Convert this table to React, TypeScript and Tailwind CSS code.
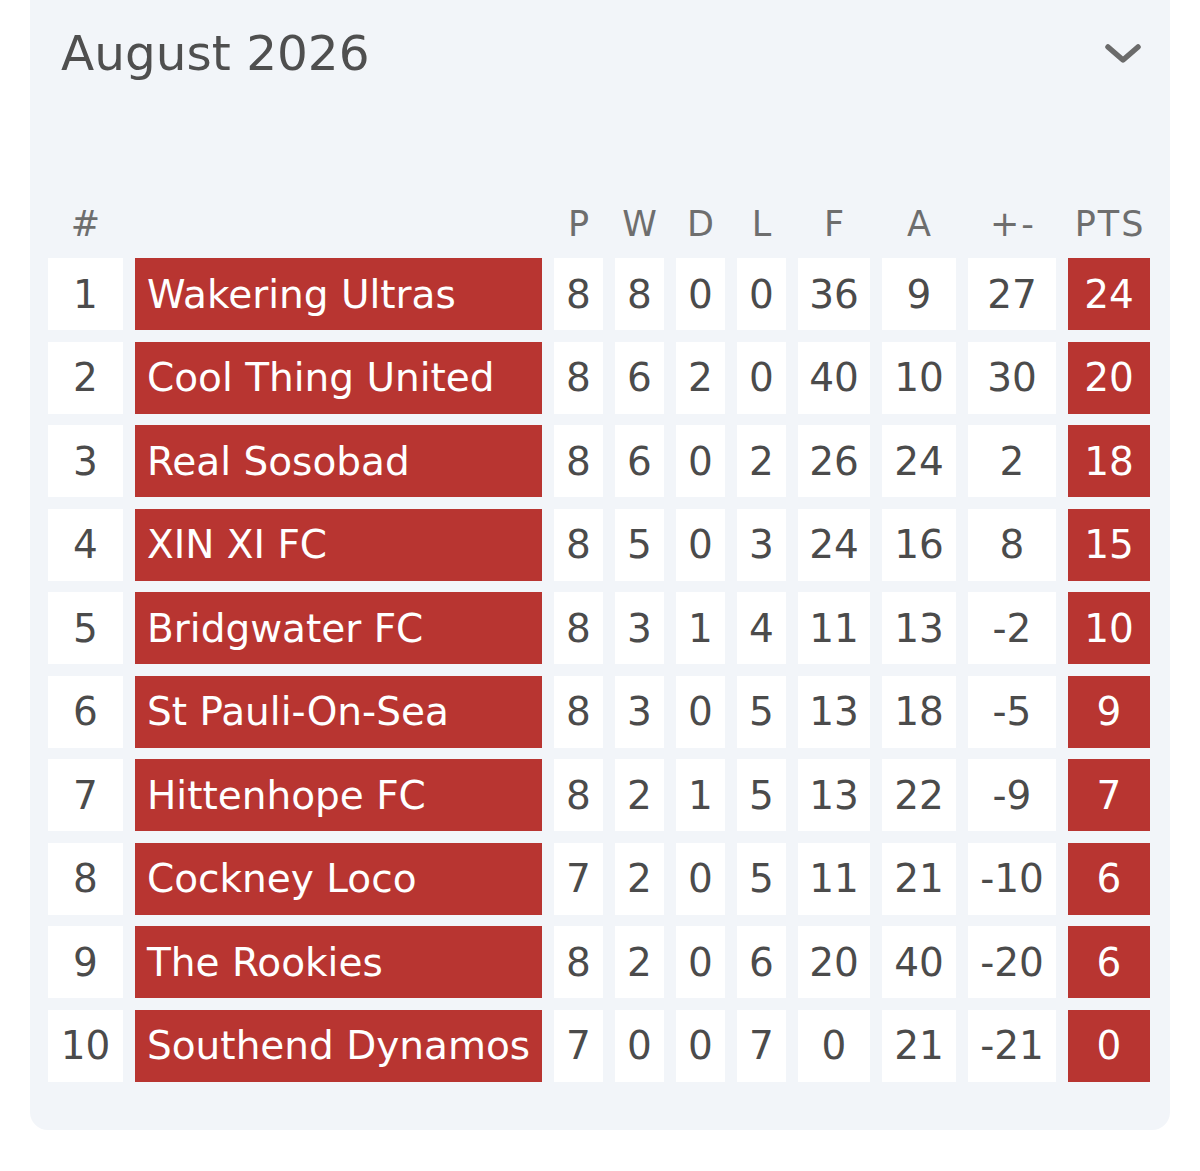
import { useState } from 'react';

interface Team {
  pos: number;
  name: string;
  p: number;
  w: number;
  d: number;
  l: number;
  f: number;
  a: number;
  gd: number;
  pts: number;
}

const teams: Team[] = [
  { pos: 1, name: 'Wakering Ultras', p: 8, w: 8, d: 0, l: 0, f: 36, a: 9, gd: 27, pts: 24 },
  { pos: 2, name: 'Cool Thing United', p: 8, w: 6, d: 2, l: 0, f: 40, a: 10, gd: 30, pts: 20 },
  { pos: 3, name: 'Real Sosobad', p: 8, w: 6, d: 0, l: 2, f: 26, a: 24, gd: 2, pts: 18 },
  { pos: 4, name: 'XIN XI FC', p: 8, w: 5, d: 0, l: 3, f: 24, a: 16, gd: 8, pts: 15 },
  { pos: 5, name: 'Bridgwater FC', p: 8, w: 3, d: 1, l: 4, f: 11, a: 13, gd: -2, pts: 10 },
  { pos: 6, name: 'St Pauli-On-Sea', p: 8, w: 3, d: 0, l: 5, f: 13, a: 18, gd: -5, pts: 9 },
  { pos: 7, name: 'Hittenhope FC', p: 8, w: 2, d: 1, l: 5, f: 13, a: 22, gd: -9, pts: 7 },
  { pos: 8, name: 'Cockney Loco', p: 7, w: 2, d: 0, l: 5, f: 11, a: 21, gd: -10, pts: 6 },
  { pos: 9, name: 'The Rookies', p: 8, w: 2, d: 0, l: 6, f: 20, a: 40, gd: -20, pts: 6 },
  { pos: 10, name: 'Southend Dynamos', p: 7, w: 0, d: 0, l: 7, f: 0, a: 21, gd: -21, pts: 0 },
];

const cols = 'grid grid-cols-[75px_407px_49px_49px_49px_49px_72px_74px_88px_82px] gap-x-[12px]';
const headers = ['#', '', 'P', 'W', 'D', 'L', 'F', 'A', '+-', 'PTS'];

function NumCell({ value }: { value: number }) {
  return (
    <div className="h-[72px] bg-white flex items-center justify-center text-[#4b4b4b]">
      {value}
    </div>
  );
}

export default function App() {
  const [open, setOpen] = useState(true);

  return (
    <div
      className="min-h-screen bg-white px-[30px]"
      style={{ fontFamily: '"DejaVu Sans", "Noto Sans", sans-serif' }}
    >
      <div className="bg-[#f2f5f9] rounded-b-[18px] pl-[18px] pr-[18px] pb-[48px]">
        {/* Header */}
        <div className="flex items-center justify-between pl-[13px] pr-[11px] h-[110px] pb-[2px]">
          <h2 className="text-[48.5px] text-[#4f4f4f] leading-none -mt-[2px]">August 2026</h2>
          <button onClick={() => setOpen(!open)} className="text-[#6b6b6b]">
            <svg width="36" height="20" viewBox="0 0 36 20" fill="none">
              <path d="M3 3 L18 16 L33 3" stroke="currentColor" strokeWidth="5.5" strokeLinecap="round" strokeLinejoin="round" />
            </svg>
          </button>
        </div>

        {open && (
          <div className="text-[39px] leading-none">
            {/* Column headings */}
            <div className={`${cols} h-[148px] items-end pb-[16px] text-[#6e6e6e] text-[35px]`}>
              {headers.map((h, i) => (
                <div key={i} className="text-center tracking-[2px] pl-[2px]">{h}</div>
              ))}
            </div>

            {/* Rows */}
            <div className="flex flex-col gap-y-[11.5px]">
              {teams.map((t) => (
                <div key={t.pos} className={cols}>
                  <NumCell value={t.pos} />
                  <div className="h-[72px] bg-[#b83531] text-white flex items-center pl-[12px] whitespace-nowrap">
                    {t.name}
                  </div>
                  <NumCell value={t.p} />
                  <NumCell value={t.w} />
                  <NumCell value={t.d} />
                  <NumCell value={t.l} />
                  <NumCell value={t.f} />
                  <NumCell value={t.a} />
                  <NumCell value={t.gd} />
                  <div className="h-[72px] bg-[#b83531] text-white flex items-center justify-center">
                    {t.pts}
                  </div>
                </div>
              ))}
            </div>
          </div>
        )}
      </div>
    </div>
  );
}
